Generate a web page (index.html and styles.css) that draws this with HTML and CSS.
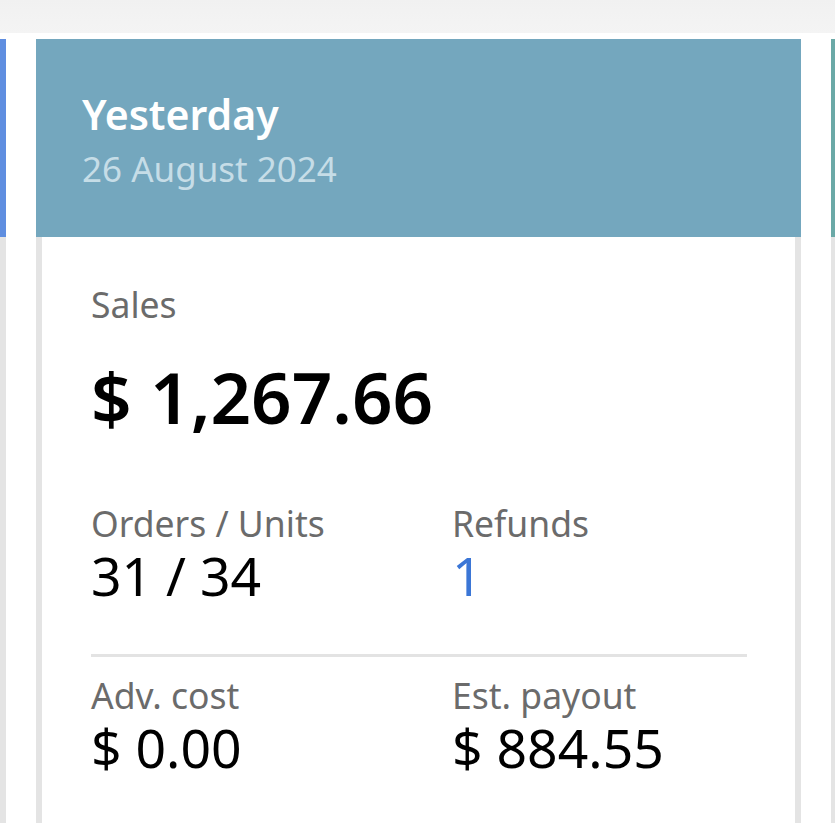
FILE: index.html
```html
<!DOCTYPE html>
<html lang="en">
<head>
<meta charset="utf-8">
<title>Sales summary</title>
<link rel="stylesheet" href="styles.css">
</head>
<body>
<div class="topbar"></div>
<div class="track">
  <section class="card card-prev">
    <header class="card-head"></header>
    <div class="card-body"></div>
  </section>
  <section class="card card-main">
    <header class="card-head">
      <h2 class="head-title">Yesterday</h2>
      <p class="head-date">26 August 2024</p>
    </header>
    <div class="card-body">
      <p class="label">Sales</p>
      <p class="amount">$ 1,267.66</p>
      <div class="grid">
        <div class="cell">
          <p class="label">Orders / Units</p>
          <p class="value">31 / 34</p>
        </div>
        <div class="cell">
          <p class="label">Refunds</p>
          <p class="value value-link">1</p>
        </div>
      </div>
      <hr class="divider">
      <div class="grid grid-bottom">
        <div class="cell">
          <p class="label">Adv. cost</p>
          <p class="value">$ 0.00</p>
        </div>
        <div class="cell">
          <p class="label">Est. payout</p>
          <p class="value">$ 884.55</p>
        </div>
      </div>
    </div>
  </section>
  <section class="card card-next">
    <header class="card-head"></header>
    <div class="card-body"></div>
  </section>
</div>
</body>
</html>
```
FILE: styles.css
```css
html, body {
  margin: 0;
  padding: 0;
  background: #ffffff;
  overflow: hidden;
  height: 823px;
}

body {
  font-family: "Noto Sans", "Open Sans", sans-serif;
}

p, h2 {
  margin: 0;
}

.topbar {
  height: 33px;
  background: linear-gradient(#f1f1f1, #f4f4f4);
}

.track {
  display: flex;
  gap: 30px;
  margin-top: 6px;
  margin-left: -759px;
}

.card {
  flex: 0 0 765px;
  display: flex;
  flex-direction: column;
}

.card-head {
  box-sizing: border-box;
  height: 198px;
  background: #74a7be;
  padding: 55px 46px 0;
}

.card-prev .card-head {
  background: #5f8ee0;
}

.card-next .card-head {
  background: #6ba9a7;
}

.card-body {
  border-left: 6px solid #e4e4e4;
  border-right: 6px solid #e4e4e4;
  padding: 50px 48px 200px 49px;
  min-height: 400px;
}

.head-title {
  font-size: 41px;
  line-height: 1;
  font-weight: 600;
  color: #ffffff;
}

.head-date {
  margin-top: 16px;
  font-size: 35px;
  line-height: 1;
  color: #c6dde7;
}

.label {
  font-size: 35.5px;
  line-height: 1;
  color: #6b6b6b;
}

.amount {
  margin-top: 38px;
  font-size: 71px;
  line-height: 1;
  font-weight: 600;
  color: #000000;
}

.grid {
  display: grid;
  grid-template-columns: 361px 1fr;
  margin-top: 74px;
}

.grid-bottom {
  margin-top: 21px;
}

.value {
  margin-top: 8px;
  font-size: 53.5px;
  line-height: 1;
  color: #000000;
}

.value-link {
  color: #3b76d6;
}

.divider {
  margin: 51px 0 0;
  border: 0;
  height: 3px;
  background: #e3e3e3;
}
```
